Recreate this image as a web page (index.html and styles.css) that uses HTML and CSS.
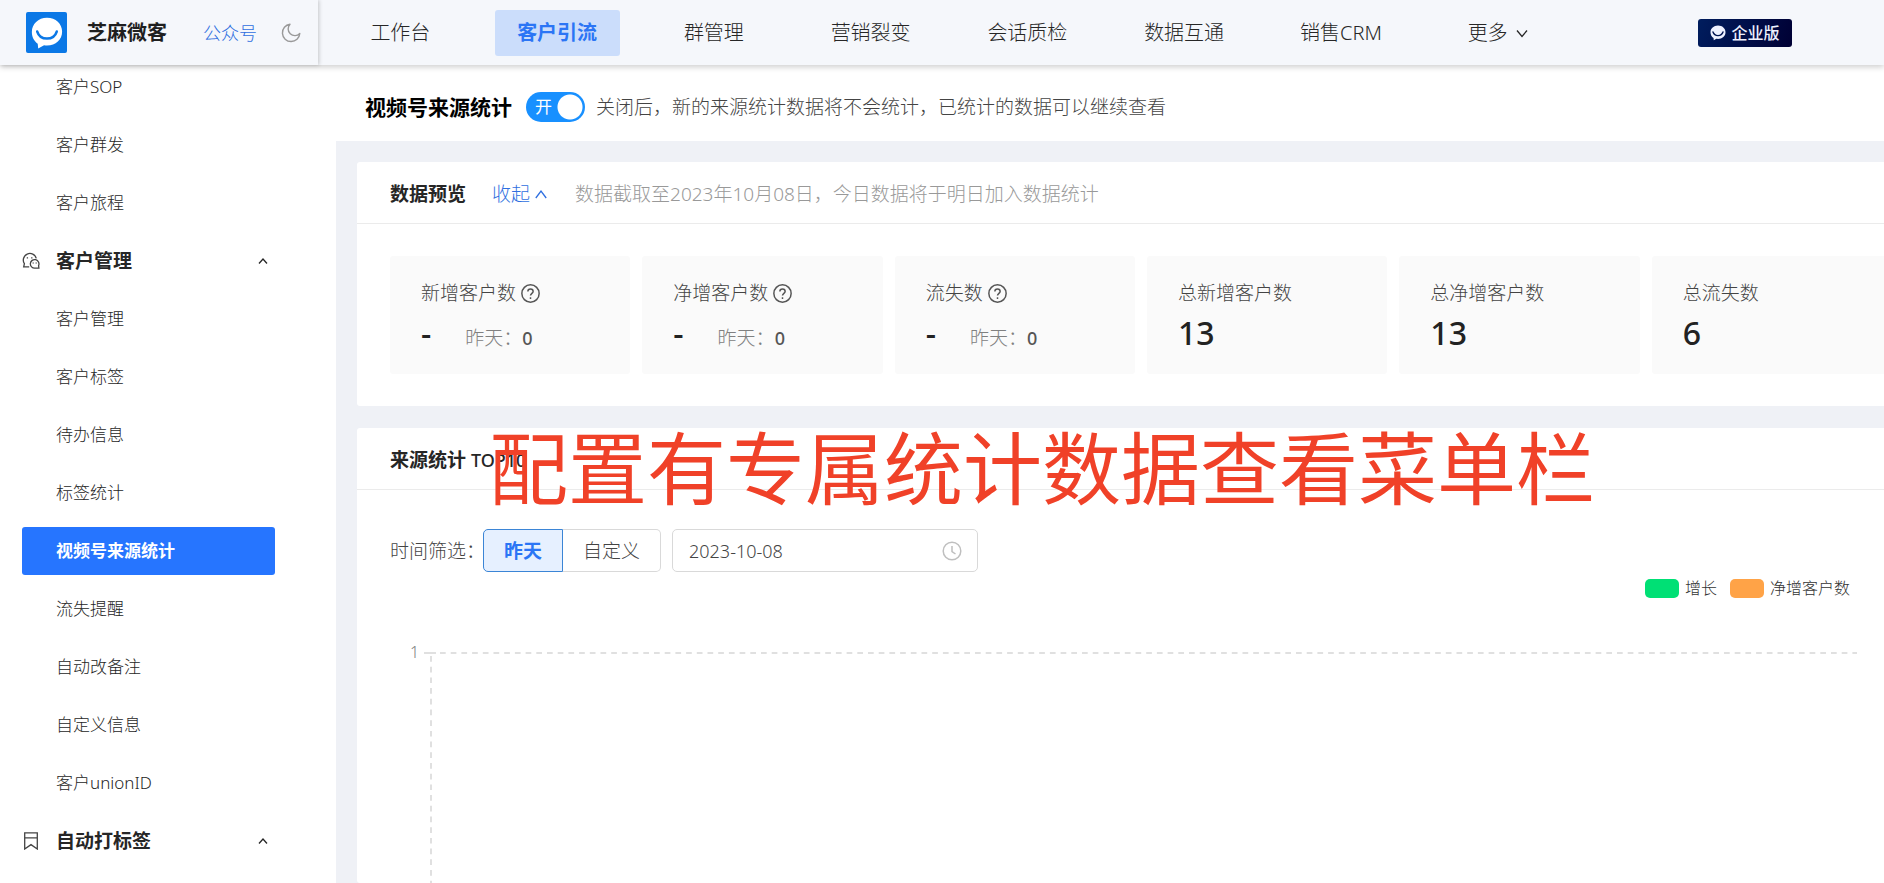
FILE: index.html
```
<!DOCTYPE html>
<html lang="zh-CN">
<head>
<meta charset="utf-8">
<title>视频号来源统计 - 芝麻微客</title>
<link rel="stylesheet" href="styles.css">
</head>
<body>
<header class="topbar">
  <div class="brand">
    <svg class="brand-logo" viewBox="0 0 42 42" aria-hidden="true">
      <rect width="42" height="42" rx="2" fill="#0b78e6"/>
      <path d="M21.500 6C12.500 6 6 12.500 6 20.500c0 5.500 2.500 9.500 6 12l.5 5 6-3.500c1 .2 2 .3 3 .3 9 0 15.500-6 15.500-14S30.500 6 21.500 6z" fill="#fff"/>
      <path d="M11.500 20c1.500 4.800 5.200 7.200 10 7.200s8.500-2.400 10-7.200" fill="none" stroke="#0b78e6" stroke-width="2.600" stroke-linecap="round"/>
    </svg>
    <strong class="brand-name">芝麻微客</strong>
    <a class="brand-link" href="#">公众号</a>
    <button class="theme-button" type="button" aria-label="切换主题">
      <svg viewBox="0 0 20 20" aria-hidden="true"><path d="M9 1.200A8.700 8.700 0 1 0 18.800 10.500 5.600 5.600 0 1 1 9 1.200z" fill="none" stroke="#999" stroke-width="1.400" stroke-linejoin="round"/></svg>
    </button>
  </div>
  <nav class="nav">
    <a class="nav-item" href="#">工作台</a>
    <a class="nav-item nav-item-active" href="#">客户引流</a>
    <a class="nav-item" href="#">群管理</a>
    <a class="nav-item" href="#">营销裂变</a>
    <a class="nav-item" href="#">会话质检</a>
    <a class="nav-item" href="#">数据互通</a>
    <a class="nav-item" href="#">销售CRM</a>
    <a class="nav-item" href="#">更多
      <svg class="chevron" viewBox="0 0 12 12" aria-hidden="true"><path d="M1 3.500l5 6 5-6" /></svg>
    </a>
  </nav>
  <a class="edition" href="#">
    <svg viewBox="0 0 16 16" aria-hidden="true">
      <path d="M8 .5C3.700.5.5 3.500.5 7.200c0 2.700 1.200 4.500 3 5.700l.3 2.300 2.600-1.400c.5.100 1 .1 1.600.1 4.300 0 7.500-2.900 7.500-6.700S12.300.5 8 .5z" fill="#eef1ff"/>
      <path d="M3 7c.8 2.400 2.600 3.600 5 3.600s4.200-1.200 5-3.600" fill="none" stroke="#001450" stroke-width="1.400" stroke-linecap="round"/>
    </svg>
    企业版
  </a>
</header>

<div class="layout">
  <aside class="sidebar">
    <nav class="menu">
      <a class="menu-item" href="#">客户SOP</a>
      <a class="menu-item" href="#">客户群发</a>
      <a class="menu-item" href="#">客户旅程</a>
      <button class="menu-group" type="button">
        <svg class="menu-icon" viewBox="0 0 18 18" aria-hidden="true">
          <path d="M7.200 14.800H1.700l.7-3.100A6.600 6.600 0 1 1 14.300 6.400"/>
          <path d="M16.900 16.200l-.3-2.600A4.300 4.300 0 1 0 12.900 16.200z"/>
          <path d="M5.400 5.200v1.400M9.800 5.200v1.400M11.200 10.600v1M14.200 10.600v1"/>
        </svg>
        客户管理
        <svg class="chevron menu-chevron" viewBox="0 0 12 12" aria-hidden="true"><path d="M2 8.500l4-4.500 4 4.500"/></svg>
      </button>
      <a class="menu-item" href="#">客户管理</a>
      <a class="menu-item" href="#">客户标签</a>
      <a class="menu-item" href="#">待办信息</a>
      <a class="menu-item" href="#">标签统计</a>
      <a class="menu-item menu-item-active" href="#">视频号来源统计</a>
      <a class="menu-item" href="#">流失提醒</a>
      <a class="menu-item" href="#">自动改备注</a>
      <a class="menu-item" href="#">自定义信息</a>
      <a class="menu-item" href="#">客户unionID</a>
      <button class="menu-group" type="button">
        <svg class="menu-icon" viewBox="0 0 18 18" aria-hidden="true"><path d="M2.700.8h12.600v16.200L9 12.600 2.700 17zM2.700 5.800h12.600"/></svg>
        自动打标签
        <svg class="chevron menu-chevron" viewBox="0 0 12 12" aria-hidden="true"><path d="M2 8.500l4-4.500 4 4.500"/></svg>
      </button>
    </nav>
  </aside>

  <main class="main">
    <div class="page-head">
      <h1 class="page-title">视频号来源统计</h1>
      <label class="switch">
        <input type="checkbox" class="switch-input" checked aria-label="来源统计开关">
        <span class="switch-text">开</span>
      </label>
      <p class="page-note">关闭后，新的来源统计数据将不会统计，已统计的数据可以继续查看</p>
    </div>

    <div class="panels">
      <section class="panel">
        <header class="panel-head">
          <h2 class="panel-title">数据预览</h2>
          <button class="fold" type="button">收起
            <svg class="chevron" viewBox="0 0 12 12" aria-hidden="true"><path d="M.8 10L6 3l5.200 7"/></svg>
          </button>
          <p class="panel-note">数据截取至2023年10月08日，今日数据将于明日加入数据统计</p>
        </header>
        <div class="stats">
          <article class="stat">
            <h3 class="stat-label">新增客户数 <svg class="help" viewBox="0 0 18 18" aria-hidden="true"><circle cx="9" cy="9" r="8.200"/><path d="M6.500 7.200c0-1.600 1-2.400 2.500-2.400s2.500.9 2.500 2.200c0 1.800-2.500 1.900-2.500 4M9 12.600v1.500"/></svg></h3>
            <p class="stat-row"><strong class="stat-value">-</strong><span class="stat-prev">昨天：<b>0</b></span></p>
          </article>
          <article class="stat">
            <h3 class="stat-label">净增客户数 <svg class="help" viewBox="0 0 18 18" aria-hidden="true"><circle cx="9" cy="9" r="8.200"/><path d="M6.500 7.200c0-1.600 1-2.400 2.500-2.400s2.500.9 2.500 2.200c0 1.800-2.500 1.900-2.500 4M9 12.600v1.500"/></svg></h3>
            <p class="stat-row"><strong class="stat-value">-</strong><span class="stat-prev">昨天：<b>0</b></span></p>
          </article>
          <article class="stat">
            <h3 class="stat-label">流失数 <svg class="help" viewBox="0 0 18 18" aria-hidden="true"><circle cx="9" cy="9" r="8.200"/><path d="M6.500 7.200c0-1.600 1-2.400 2.500-2.400s2.500.9 2.500 2.200c0 1.800-2.500 1.900-2.500 4M9 12.600v1.500"/></svg></h3>
            <p class="stat-row"><strong class="stat-value">-</strong><span class="stat-prev">昨天：<b>0</b></span></p>
          </article>
          <article class="stat">
            <h3 class="stat-label">总新增客户数</h3>
            <p class="stat-row"><strong class="stat-value">13</strong></p>
          </article>
          <article class="stat">
            <h3 class="stat-label">总净增客户数</h3>
            <p class="stat-row"><strong class="stat-value">13</strong></p>
          </article>
          <article class="stat">
            <h3 class="stat-label">总流失数</h3>
            <p class="stat-row"><strong class="stat-value">6</strong></p>
          </article>
        </div>
      </section>

      <section class="panel panel-source">
        <header class="panel-head">
          <h2 class="panel-title">来源统计 <span class="panel-rank">TOP10</span></h2>
        </header>
        <p class="caption">配置有专属统计数据查看菜单栏</p>
        <div class="filters">
          <label class="filter-label" for="date">时间筛选：</label>
          <div class="segment">
            <button class="segment-button segment-button-active" type="button">昨天</button>
            <button class="segment-button" type="button">自定义</button>
          </div>
          <div class="date-field">
            <input class="date-input" id="date" type="text" value="2023-10-08">
            <svg class="clock" viewBox="0 0 20 20" aria-hidden="true"><circle cx="10" cy="10" r="8.800"/><path d="M10 5v5.500l3.500 2.500"/></svg>
          </div>
        </div>
        <div class="chart">
          <ul class="legend">
            <li class="legend-item"><i class="swatch swatch-growth"></i>增长</li>
            <li class="legend-item"><i class="swatch swatch-net"></i>净增客户数</li>
          </ul>
          <div class="plot">
            <span class="tick">1</span>
            <svg class="axes" aria-hidden="true">
              <line x1="0" y1="1" x2="12" y2="1"/>
              <line class="dash" x1="16" y1="1" x2="100%" y2="1"/>
              <line class="dash" x1="7" y1="4" x2="7" y2="100%"/>
            </svg>
          </div>
        </div>
      </section>
    </div>
  </main>
</div>
</body>
</html>
```
FILE: styles.css
```
* {
  box-sizing: border-box;
}

body {
  margin: 0;
  height: 100vh;
  display: flex;
  flex-direction: column;
  overflow: hidden;
  background: #fff;
  color: #262626;
  font-family: "Noto Sans", "Noto Sans CJK SC", sans-serif;
  font-size: 19px;
  font-weight: 300;
  line-height: 28px;
}

h1, h2, h3, p, ul {
  margin: 0;
  padding: 0;
}

a {
  color: inherit;
  text-decoration: none;
}

button, input {
  font: inherit;
  color: inherit;
}

button {
  padding: 0;
  border: 0;
  background: none;
  cursor: pointer;
}

.chevron {
  width: 12px;
  height: 12px;
  fill: none;
  stroke: currentColor;
  stroke-width: 1.3;
}

/* Top bar */
.topbar {
  position: relative;
  z-index: 2;
  flex: none;
  display: flex;
  align-items: center;
  height: 65px;
  background: #f5f7fb;
  box-shadow: 0 2px 6px rgba(0, 0, 0, 0.2);
}

.brand {
  display: flex;
  align-items: center;
  width: 318px;
  height: 100%;
  padding-left: 26px;
  box-shadow: 1px 0 4px rgba(0, 0, 0, 0.2);
}

.brand-logo {
  width: 41px;
  height: 41px;
}

.brand-name {
  margin-left: 20px;
  color: #1f1f1f;
  font-size: 20px;
  font-weight: 700;
}

.brand-link {
  margin-left: 36px;
  color: #2f6fe0;
  font-size: 18px;
}

.theme-button {
  display: flex;
  margin-left: 24px;
}

.theme-button svg {
  width: 20px;
  height: 20px;
}

.nav {
  flex: 1;
  display: grid;
  grid-template-columns: repeat(8, 1fr);
  padding-left: 4px;
}

.nav-item {
  display: flex;
  align-items: center;
  justify-content: center;
  gap: 8px;
  height: 46px;
  margin: 0 16px;
  border-radius: 3px;
  font-size: 20px;
  white-space: nowrap;
}

.nav-item-active {
  background: #cbddfb;
  color: #2b75f5;
  font-weight: 700;
}

.edition {
  display: flex;
  align-items: center;
  justify-content: center;
  gap: 5px;
  width: 94px;
  height: 28px;
  margin: 0 92px 0 122px;
  border-radius: 3px;
  background: linear-gradient(110deg, #001d5e, #000034);
  color: #eef1ff;
  font-size: 16px;
  font-weight: 500;
  white-space: nowrap;
}

.edition svg {
  width: 16px;
  height: 16px;
}

/* Sidebar */
.layout {
  flex: 1;
  display: flex;
  min-height: 0;
}

.sidebar {
  flex: none;
  width: 336px;
  overflow: hidden;
}

.menu {
  display: flex;
  flex-direction: column;
  gap: 10px;
  margin-top: -2px;
  padding: 0 61px 0 22px;
}

.menu-item,
.menu-group {
  display: flex;
  flex: none;
  align-items: center;
  height: 48px;
}

.menu-item {
  padding-left: 34px;
  border-radius: 3px;
  font-size: 17px;
}

.menu-item-active {
  background: #2675ff;
  color: #fff;
  font-weight: 700;
}

.menu-group {
  font-weight: 700;
}

.menu-icon {
  width: 18px;
  height: 18px;
  margin-right: 16px;
  fill: none;
  stroke: #444;
  stroke-width: 1.3;
}

.menu-chevron {
  margin: 0 6px 0 auto;
}

/* Page heading */
.main {
  flex: 1;
  display: flex;
  flex-direction: column;
  min-width: 0;
  overflow: hidden;
}

.page-head {
  flex: none;
  display: flex;
  align-items: center;
  height: 76px;
  padding: 7px 29px 0;
  white-space: nowrap;
}

.page-title {
  color: #000;
  font-size: 21px;
  font-weight: 700;
}

.switch {
  position: relative;
  width: 59px;
  height: 30px;
  margin: 0 11px 0 14px;
}

.switch-input {
  appearance: none;
  display: block;
  width: 100%;
  height: 100%;
  margin: 0;
  border-radius: 15px;
  background:
    radial-gradient(circle 13px at calc(100% - 15px) 50%, #fff 12px, transparent 13px),
    #1890ff;
}

.switch-text {
  position: absolute;
  left: 9px;
  top: 1px;
  color: #fff;
  font-size: 17px;
  font-weight: 400;
}

.page-note {
  color: #444;
}

/* Panels */
.panels {
  flex: 1;
  display: flex;
  flex-direction: column;
  gap: 22px;
  min-height: 0;
  padding: 21px 0 0 21px;
  background: #eff1f6;
}

.panel {
  flex: none;
  margin-right: -41px;
  border-radius: 3px;
  background: #fff;
}

.panel-source {
  position: relative;
  flex: 1;
  display: flex;
  flex-direction: column;
  min-height: 0;
}

.panel-head {
  flex: none;
  display: flex;
  align-items: center;
  height: 62px;
  padding: 3px 33px 0;
  border-bottom: 1px solid #ebebeb;
  white-space: nowrap;
}

.panel-title {
  font-size: 19px;
  font-weight: 700;
}

.panel-rank {
  font-size: 18px;
  font-weight: 500;
}

.fold {
  display: flex;
  align-items: center;
  gap: 5px;
  margin: 0 28px 0 26px;
  color: #2f6fe0;
}

.panel-note {
  color: #999;
}

.stats {
  display: grid;
  grid-template-columns: repeat(6, 1fr);
  gap: 12px;
  padding: 32px 33px;
}

.stat {
  height: 118px;
  padding: 23px 31px 0;
  border-radius: 3px;
  background: #fafafa;
}

.stat-label {
  display: flex;
  align-items: center;
  gap: 5px;
  color: #444;
  font-size: 19px;
  font-weight: 300;
}

.help {
  width: 19px;
  height: 19px;
  fill: none;
  stroke: #555;
  stroke-width: 1.4;
}

.stat-row {
  display: flex;
  align-items: baseline;
  gap: 34px;
  margin-top: 6px;
  line-height: 40px;
}

.stat-value {
  color: #222;
  font-size: 32px;
  font-weight: 500;
}

.stat-prev {
  color: #808080;
}

.stat-prev b {
  color: #555;
  font-size: 18px;
  font-weight: 500;
}

/* Large red caption over the source panel */
.caption {
  position: absolute;
  top: 1px;
  left: 132px;
  color: #f04128;
  font-size: 79px;
  font-weight: 400;
  line-height: 79px;
  white-space: nowrap;
}

/* Filters */
.filters {
  display: flex;
  align-items: center;
  padding: 39px 33px 0;
}

.filter-label {
  width: 93px;
  color: #444;
  white-space: nowrap;
}

.segment {
  display: flex;
  height: 43px;
  margin-right: 11px;
}

.segment-button {
  padding: 0 20px;
  border: 1px solid #d9d9d9;
  border-left: 0;
  border-radius: 0 5px 5px 0;
  color: #444;
}

.segment-button-active {
  border: 1px solid #3b85d6;
  border-radius: 5px 0 0 5px;
  background: #e6f0ff;
  color: #2b75f5;
  font-weight: 700;
}

.date-field {
  display: flex;
  align-items: center;
  width: 306px;
  height: 43px;
  padding: 0 15px 0 16px;
  border: 1px solid #d9d9d9;
  border-radius: 5px;
}

.date-input {
  flex: 1;
  min-width: 0;
  padding: 0;
  border: 0;
  outline: 0;
  background: none;
  color: #444;
  font-size: 18px;
}

.clock {
  width: 20px;
  height: 20px;
  fill: none;
  stroke: #bfbfbf;
  stroke-width: 1.5;
}

/* Chart */
.chart {
  flex: 1;
  display: flex;
  flex-direction: column;
  padding: 2px 68px 0 53px;
}

.legend {
  display: flex;
  justify-content: flex-end;
  gap: 13px;
  margin-right: 7px;
  list-style: none;
}

.legend-item {
  display: flex;
  align-items: center;
  gap: 6px;
  color: #333;
  font-size: 16px;
}

.swatch {
  width: 34px;
  height: 19px;
  border-radius: 5px;
}

.swatch-growth {
  background: #00e075;
}

.swatch-net {
  background: #ffa347;
}

.plot {
  flex: 1;
  display: flex;
  gap: 5px;
  margin-top: 50px;
}

.tick {
  width: 9px;
  color: #808080;
  font-size: 16px;
  line-height: 1px;
  text-align: right;
}

.axes {
  flex: 1;
  height: 100%;
  stroke: #e0e0e0;
  stroke-width: 2;
}

.dash {
  stroke-dasharray: 5.7 5;
}
```
